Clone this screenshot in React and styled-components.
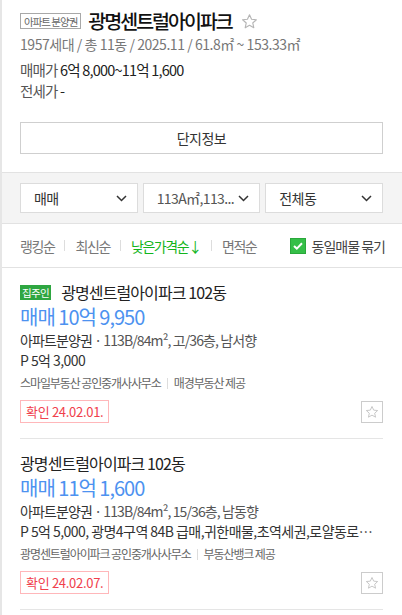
import React from 'react';
import styled, { createGlobalStyle } from 'styled-components';

const GlobalStyle = createGlobalStyle`
  body {
    margin: 0;
    background: #fff;
    font-family: "Noto Sans CJK KR", "Noto Sans", sans-serif;
    color: #222;
  }
  * { box-sizing: border-box; }
`;

const Page = styled.div`
  width: 402px;
  min-height: 615px;
  border-left: 2px solid #e6e6e6;
  overflow: hidden;
`;

const Header = styled.section`
  padding: 9px 19px 18px 18px;
  border-bottom: 1px solid #e2e2e2;
`;

const TitleRow = styled.div`
  display: flex;
  align-items: center;
  height: 24px;
`;

const TypeBadge = styled.span`
  display: inline-flex;
  align-items: center;
  height: 16px;
  padding: 0 3px;
  border: 1px solid #a8a8a8;
  font-size: 10.5px;
  color: #666;
  letter-spacing: -1px;
  margin-right: 7px;
`;

const ComplexName = styled.h1`
  margin: 0;
  font-size: 19.5px;
  font-weight: 500;
  color: #111;
  letter-spacing: -2px;
  line-height: 24px;
`;

const HeaderStar = styled.span`
  display: inline-flex;
  margin-left: 9px;
`;

const Meta = styled.div`
  margin-top: 1px;
  font-size: 14px;
  line-height: 20px;
  color: #777;
  letter-spacing: -0.45px;
`;

const PriceLine = styled.div`
  margin-top: ${p => p.$gap}px;
  font-size: 14.5px;
  line-height: 20px;
  color: #222;
  letter-spacing: -0.8px;

  span { color: #555; }
`;

const InfoButton = styled.button`
  display: block;
  width: 100%;
  height: 32px;
  margin-top: 21px;
  border: 1px solid #cfcfcf;
  background: #fff;
  font-family: inherit;
  font-size: 14px;
  letter-spacing: -0.5px;
  color: #333;
`;

const FilterBar = styled.div`
  display: grid;
  grid-template-columns: repeat(3, 1fr);
  gap: 5px;
  padding: 10px 19px 10px 18px;
  background: #f4f4f4;
  border-bottom: 1px solid #e2e2e2;
`;

const Select = styled.div`
  display: flex;
  align-items: center;
  justify-content: space-between;
  height: 30px;
  padding: 0 10px 0 13px;
  background: #fff;
  border: 1px solid #dcdcdc;
  font-size: 14px;
  letter-spacing: -0.6px;
  color: ${p => (p.$muted ? '#555' : '#333')};
  white-space: nowrap;
`;

const SortRow = styled.div`
  display: flex;
  align-items: center;
  height: 44px;
  padding: 0 17px 0 18px;
  border-bottom: 1px solid #e2e2e2;
`;

const SortItem = styled.span`
  font-size: 14px;
  color: ${p => (p.$active ? '#12b51c' : '#777')};
  letter-spacing: -1.4px;
`;

const SortSep = styled.span`
  width: 1px;
  height: 11px;
  margin: 0 10px;
  background: #ddd;
`;

const GroupToggle = styled.label`
  display: flex;
  align-items: center;
  gap: 6px;
  margin-left: auto;
  font-size: 14px;
  color: #444;
  letter-spacing: -1px;
`;

const CheckBox = styled.span`
  display: inline-flex;
  align-items: center;
  justify-content: center;
  width: 16px;
  height: 16px;
  background: #35bf48;
  border: 1px solid #2aa83b;
`;

const Listing = styled.article`
  margin: 0 19px 0 18px;
  padding: 13px 0 15px;
  border-bottom: 1px solid #e5e5e5;
`;

const ListingTitle = styled.div`
  display: flex;
  align-items: center;
  gap: 10px;
  height: 22px;
  font-size: 16px;
  color: #222;
  letter-spacing: -0.9px;
`;

const OwnerBadge = styled.span`
  display: inline-flex;
  align-items: center;
  height: 15px;
  padding: 0 2px;
  background: #2ea641;
  color: #fff;
  font-size: 10.5px;
  letter-spacing: -0.6px;
`;

const ListingPrice = styled.div`
  margin-top: 1px;
  font-size: 20px;
  line-height: 26px;
  color: #4d92f0;
  letter-spacing: -1px;
`;

const Spec = styled.div`
  font-size: 14px;
  line-height: 20px;
  color: ${p => (p.$dark ? '#333' : '#555')};
  letter-spacing: ${p => (p.$dark ? '-0.55px' : '-0.9px')};
  white-space: nowrap;
  overflow: hidden;
  text-overflow: ellipsis;

  b { font-weight: 400; color: #333; }
`;

const Agency = styled.div`
  display: flex;
  align-items: center;
  margin-top: 3px;
  font-size: 12px;
  line-height: 20px;
  color: #666;
  letter-spacing: -1.1px;
  white-space: pre;
`;

const AgencySep = styled.span`
  width: 1px;
  height: 11px;
  margin: 0 6px;
  background: #ddd;
`;

const TagRow = styled.div`
  display: flex;
  align-items: center;
  justify-content: space-between;
  margin-top: 7px;
`;

const ConfirmTag = styled.span`
  display: inline-flex;
  align-items: center;
  height: 23px;
  padding: 0 5px;
  border: 1px solid #ffb7ba;
  font-size: 13px;
  color: #f0404c;
  letter-spacing: -0.3px;
`;

const StarButton = styled.button`
  display: inline-flex;
  align-items: center;
  justify-content: center;
  width: 22px;
  height: 22px;
  padding: 0;
  border: 1px solid #cccccc;
  background: #fff;
`;

const Star = ({ size = 14, color = '#c4c4c4' }) => (
  <svg width={size} height={size} viewBox="0 0 24 24" fill="none" stroke={color} strokeWidth="1.6" strokeLinejoin="round">
    <path d="M12 2.5l2.9 6.3 6.8.7-5.1 4.6 1.5 6.8L12 17.4l-6.1 3.5 1.5-6.8-5.1-4.6 6.8-.7z" />
  </svg>
);

const Chevron = () => (
  <svg width="11" height="7" viewBox="0 0 11 7" fill="none" stroke="#333" strokeWidth="1.5">
    <path d="M1 1l4.5 4.5L10 1" />
  </svg>
);

const listings = [
  {
    id: 1,
    owner: true,
    title: '광명센트럴아이파크 102동',
    price: '매매 10억 9,950',
    spec: '113B/84m², 고/36층, 남서향',
    note: 'P 5억 3,000',
    agency: '스마일부동산 공인중개사사무소',
    provider: '매경부동산 제공',
    confirmed: '24.02.01.',
  },
  {
    id: 2,
    owner: false,
    title: '광명센트럴아이파크 102동',
    price: '매매 11억 1,600',
    spec: '113B/84m², 15/36층, 남동향',
    note: 'P 5억 5,000, 광명4구역 84B 급매,귀한매물,초역세권,로얄동로얄층',
    agency: '광명센트럴아이파크 공인중개사사무소',
    provider: '부동산뱅크 제공',
    confirmed: '24.02.07.',
  },
];

const sorts = ['랭킹순', '최신순', '낮은가격순↓', '면적순'];

export default function App() {
  return (
    <Page>
      <GlobalStyle />
      <Header>
        <TitleRow>
          <TypeBadge>아파트 분양권</TypeBadge>
          <ComplexName>광명센트럴아이파크</ComplexName>
          <HeaderStar><Star size={17} color="#b5b5b5" /></HeaderStar>
        </TitleRow>
        <Meta>1957세대 / 총 11동 / 2025.11 / 61.8㎡ ~ 153.33㎡</Meta>
        <PriceLine $gap={6}><span>매매가</span> 6억 8,000~11억 1,600</PriceLine>
        <PriceLine $gap={1}><span>전세가</span> -</PriceLine>
        <InfoButton>단지정보</InfoButton>
      </Header>

      <FilterBar>
        <Select>매매<Chevron /></Select>
        <Select $muted>113A㎡,113...<Chevron /></Select>
        <Select>전체동<Chevron /></Select>
      </FilterBar>

      <SortRow>
        {sorts.map((s, i) => (
          <React.Fragment key={s}>
            {i > 0 && <SortSep />}
            <SortItem $active={i === 2}>{s}</SortItem>
          </React.Fragment>
        ))}
        <GroupToggle>
          <CheckBox>
            <svg width="10" height="8" viewBox="0 0 10 8" fill="none" stroke="#fff" strokeWidth="2">
              <path d="M1 4l2.8 2.6L9 1.3" />
            </svg>
          </CheckBox>
          동일매물 묶기
        </GroupToggle>
      </SortRow>

      {listings.map(item => (
        <Listing key={item.id}>
          <ListingTitle>
            {item.owner && <OwnerBadge>집주인</OwnerBadge>}
            {item.title}
          </ListingTitle>
          <ListingPrice>{item.price}</ListingPrice>
          <Spec><b>아파트분양권</b> · {item.spec}</Spec>
          <Spec $dark>{item.note}</Spec>
          <Agency>
            {item.agency}
            <AgencySep />
            {item.provider}
          </Agency>
          <TagRow>
            <ConfirmTag>확인 {item.confirmed}</ConfirmTag>
            <StarButton><Star /></StarButton>
          </TagRow>
        </Listing>
      ))}
    </Page>
  );
}
